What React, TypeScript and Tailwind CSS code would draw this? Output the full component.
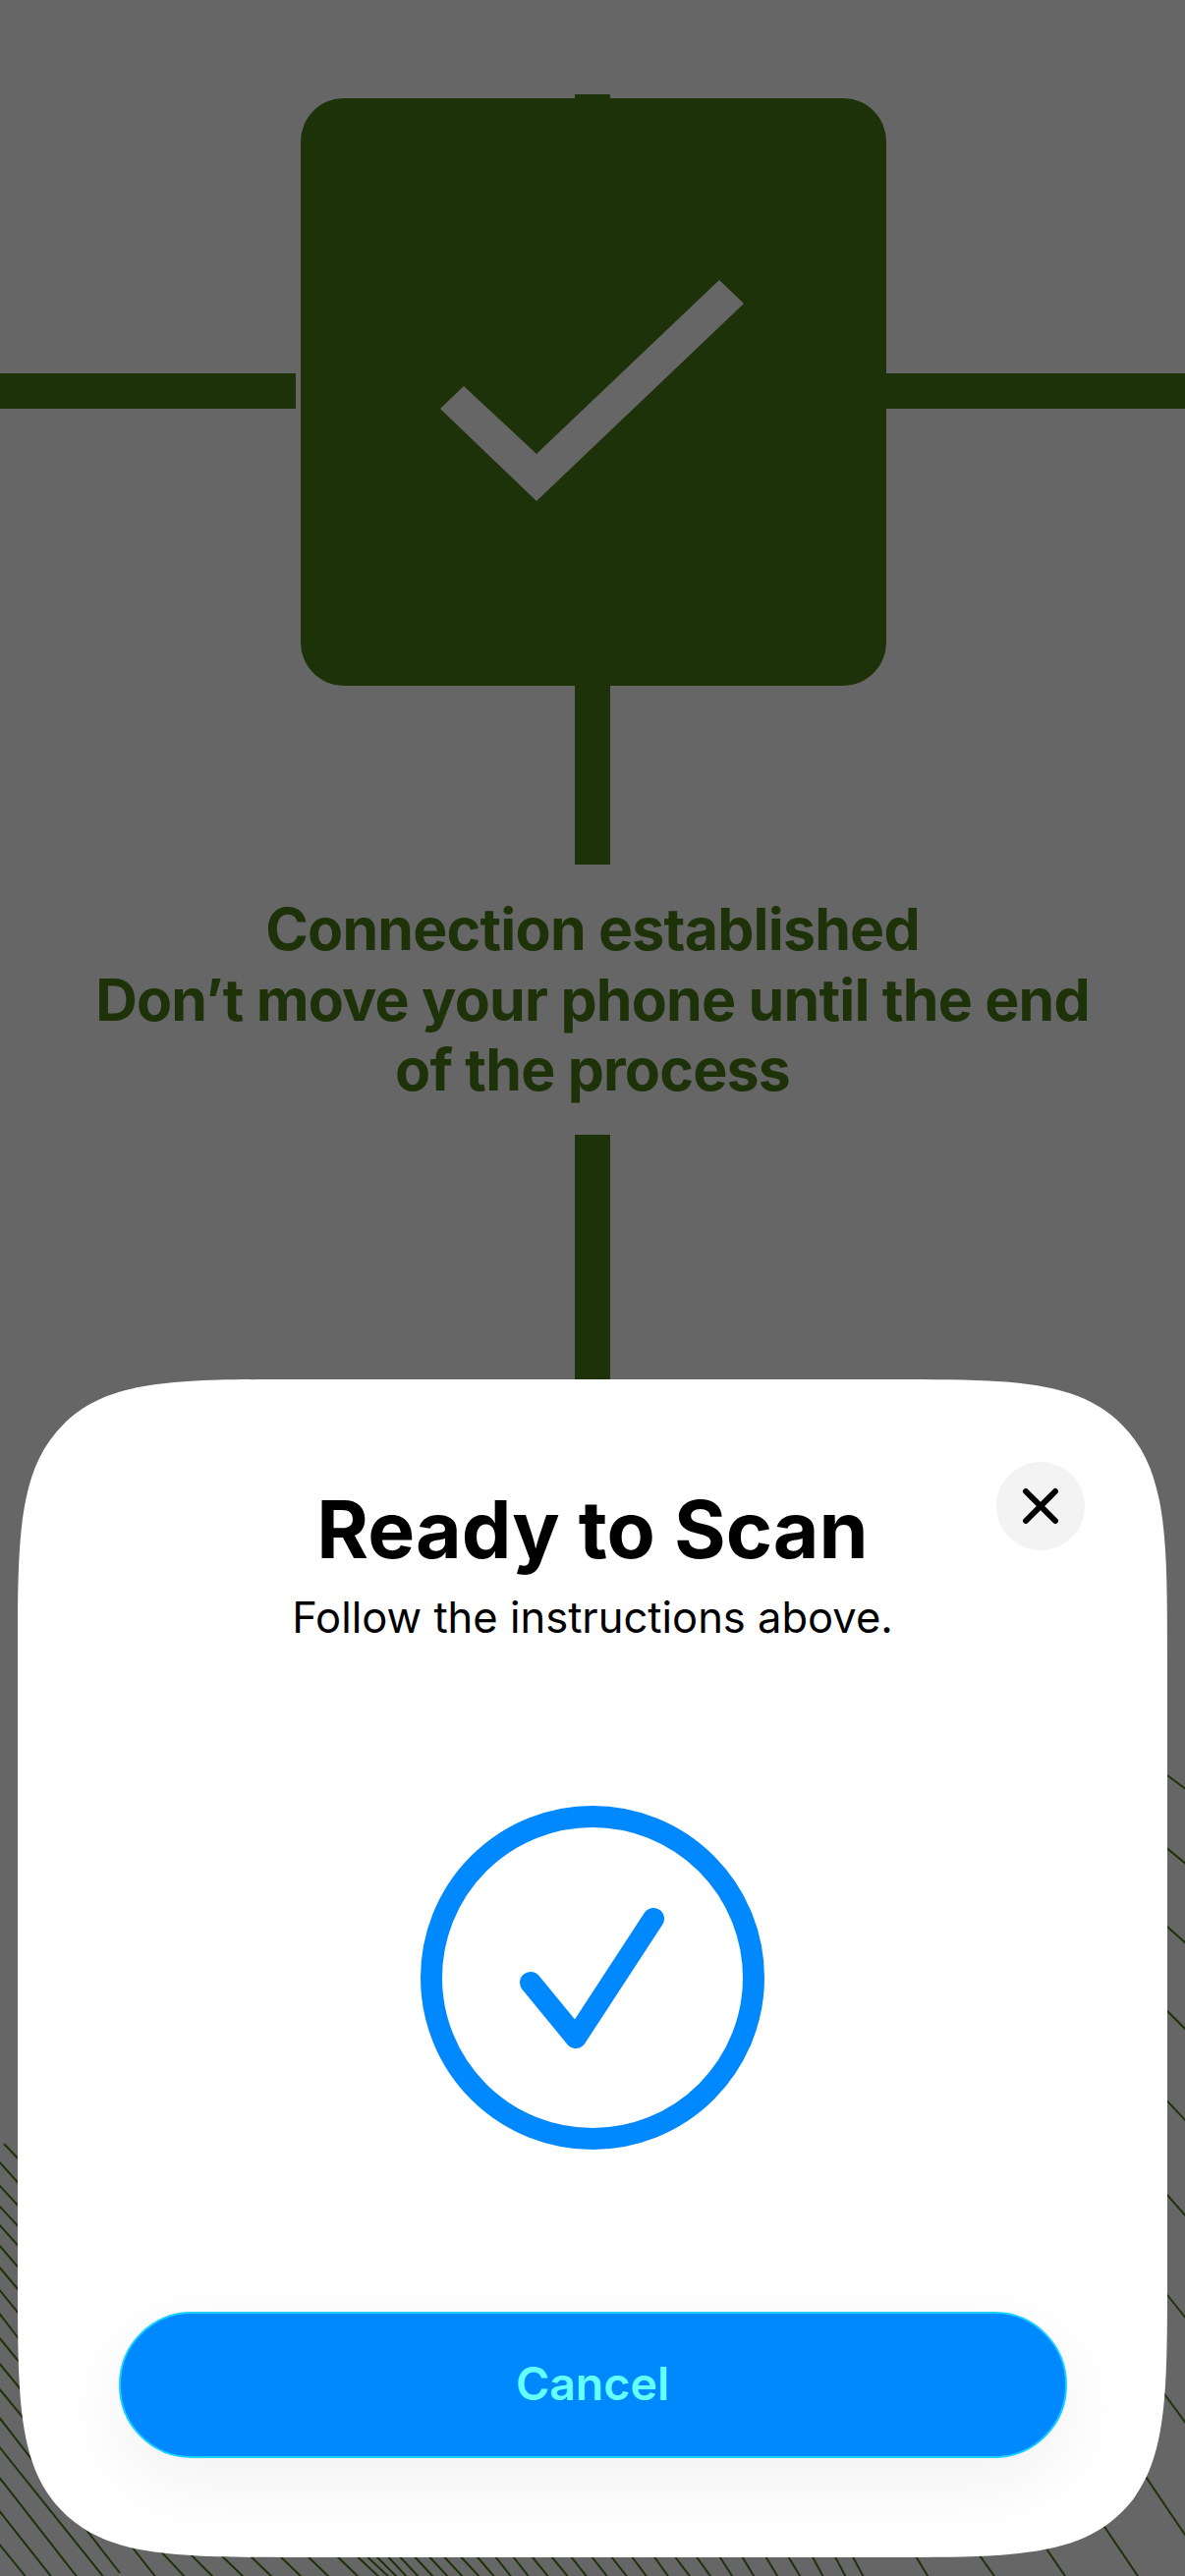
const hatch: number[][] = [
  // left edge
  [4, 2182, 24, 2203],
  [-2, 2199, 24, 2228], [-2, 2223, 24, 2251], [-2, 2244, 24, 2272], [-2, 2263, 24, 2292],
  [-2, 2284, 24, 2314], [-2, 2306, 24, 2337], [-2, 2329, 24, 2361], [-2, 2353, 24, 2387],
  [-2, 2378, 30, 2417], [-2, 2404, 30, 2443], [-2, 2430, 40, 2481], [-2, 2459, 122, 2619],
  [-2, 2489, 107, 2625], [-2, 2520, 80, 2625], [-2, 2554, 54, 2625], [-2, 2588, 28, 2625],
  // bottom edge
  [130, 2587, 160, 2625], [160, 2593, 190, 2625], [190, 2596, 219, 2625], [220, 2596, 250, 2625],
  [250, 2597, 279, 2625], [280, 2597, 309, 2625], [308, 2597, 337, 2625], [338, 2597, 367, 2625],
  [358, 2597, 388, 2625], [368, 2597, 398, 2625], [378, 2597, 406, 2625], [390, 2597, 416, 2625],
  [402, 2597, 428, 2625], [417, 2597, 443, 2625], [432, 2597, 458, 2625], [447, 2597, 473, 2625],
  [464, 2597, 490, 2625], [481, 2597, 505, 2625], [500, 2597, 522, 2625], [518, 2597, 540, 2625],
  [537, 2597, 560, 2625], [557, 2597, 580, 2625], [577, 2597, 599, 2625], [598, 2597, 620, 2625],
  [618, 2597, 640, 2625], [639, 2597, 660, 2625], [662, 2597, 682, 2625], [683, 2597, 704, 2625],
  [705, 2597, 725, 2625], [729, 2597, 747, 2625], [752, 2597, 769, 2625], [776, 2597, 793, 2625],
  [799, 2597, 816, 2625], [824, 2597, 839, 2625], [847, 2597, 862, 2625], [865, 2597, 880, 2625],
  [929, 2597, 946, 2625], [994, 2597, 1014, 2625], [1062, 2590, 1086, 2625], [1116, 2560, 1160, 2625],
  // right edge
  [1160, 2512, 1208, 2583], [1180, 2430, 1208, 2468], [1180, 2326, 1208, 2361],
  [1180, 2225, 1208, 2257], [1180, 2130, 1208, 2160], [1180, 2039, 1208, 2067], [1180, 1954, 1208, 1979],
  [1180, 1875, 1208, 1898], [1180, 1801, 1208, 1822],
];

export default function App() {
  return (
    <div className="relative flex h-[2622px] w-[1206px] flex-col items-center overflow-hidden bg-[#666666] font-['Inter',sans-serif]">
      {/* Hatching behind the sheet */}
      <svg className="absolute inset-0" width="1206" height="2622" viewBox="0 0 1206 2622" fill="none">
        {hatch.map(([x1, y1, x2, y2], i) => (
          <line key={i} x1={x1} y1={y1} x2={x2} y2={y2} stroke="#1e320a" strokeWidth="2" />
        ))}
      </svg>

      {/* Frame guide */}
      <div className="mt-[96px] h-[4px] w-[36px] shrink-0 bg-[#1e320a]" />
      <div className="flex h-[598px] w-full shrink-0 items-start">
        <div className="mt-[280px] h-[36px] w-[301px] bg-[#1e320a]" />
        <div className="ml-[5px] flex h-[598px] w-[596px] items-center justify-center rounded-[44px] bg-[#1e320a]">
          <svg width="596" height="598" viewBox="306 100 596 598">
            <polygon points="472,393 448,416 546,510 757,309 732,285 546,462" fill="#666666" />
          </svg>
        </div>
        <div className="mt-[280px] h-[36px] flex-1 bg-[#1e320a]" />
      </div>
      <div className="h-[182px] w-[36px] shrink-0 bg-[#1e320a]" />

      <p className="mt-[30px] w-[1100px] text-center text-[59px] font-bold leading-[71.5px] tracking-[-0.8px] text-[#1e320a]">
        Connection established
        <br />
        Don’t move your phone until the end
        <br />
        of the process
      </p>

      <div className="mt-[30px] h-[249px] w-[36px] shrink-0 bg-[#1e320a]" />

      {/* Scan sheet */}
      <div className="relative flex h-[1199px] w-[1170px] shrink-0 flex-col items-center overflow-hidden rounded-[290px] bg-white [corner-shape:squircle]">
        <button className="absolute right-[84px] top-[84px] flex h-[90px] w-[90px] items-center justify-center rounded-full bg-[#f3f3f3]">
          <svg width="40" height="40" viewBox="0 0 40 40" fill="none" stroke="#000000" strokeWidth="6" strokeLinecap="round">
            <path d="M5 5L35 35M35 5L5 35" />
          </svg>
        </button>

        <h1 className="mt-[107px] text-[80.5px] font-bold leading-[92px] text-black">Ready to Scan</h1>
        <p className="mt-[13px] text-[43.5px] leading-[60px] text-black">Follow the instructions above.</p>

        <svg className="mt-[162px]" width="350" height="350" viewBox="0 0 350 350" fill="none" stroke="#0088ff">
          <circle cx="175" cy="175" r="164" strokeWidth="22" />
          <path d="M112 180L158 236L237 115" strokeWidth="22" strokeLinecap="round" strokeLinejoin="round" />
        </svg>

        <button className="mt-[165px] flex h-[149px] w-[965px] items-center justify-center rounded-[74px] border-2 border-[#1ad2ff] bg-[#0088ff] text-[46.5px] font-semibold text-[#66ffff] shadow-[0_24px_80px_rgba(0,0,0,0.06)]">
          Cancel
        </button>
      </div>
    </div>
  );
}
